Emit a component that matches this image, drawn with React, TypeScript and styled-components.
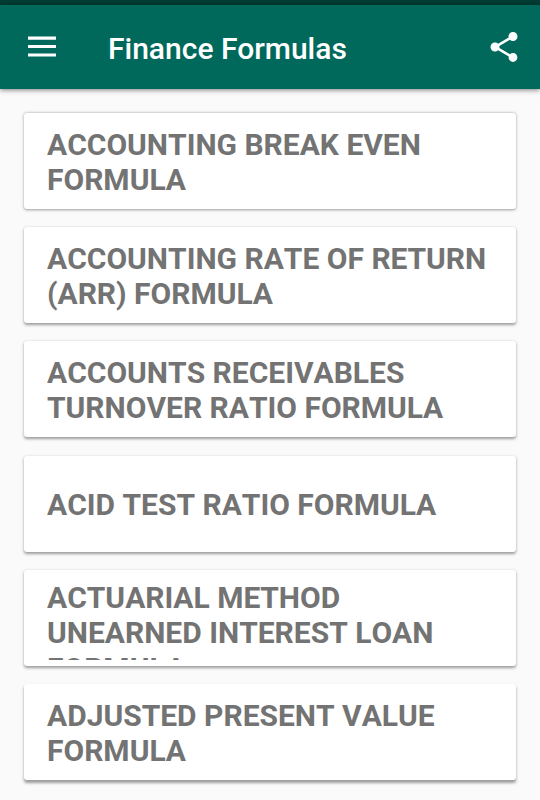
import React from 'react';
import styled, { createGlobalStyle } from 'styled-components';

const Global = createGlobalStyle`
  * { box-sizing: border-box; }
  body { margin: 0; background: #fafafa; font-family: Roboto, sans-serif; }
`;

const Screen = styled.main`
  width: 540px;
  height: 800px;
  overflow: hidden;
  background: #fafafa;
`;

const StatusBar = styled.div`
  height: 5px;
  background: #003d34;
`;

const AppBar = styled.header`
  height: 84px;
  display: flex;
  align-items: center;
  padding: 0 18px 0 27px;
  background: #00695c;
  color: #fff;
  box-shadow: 0 1px 5px rgba(0, 0, 0, 0.5);
`;

const Title = styled.h1`
  flex: 1;
  margin: 3px 0 0 51px;
  font-size: 30px;
  line-height: 36px;
  font-weight: 500;
  white-space: nowrap;
`;

const List = styled.ul`
  list-style: none;
  margin: 0;
  padding: 24px 24px 0;
  display: flex;
  flex-direction: column;
  gap: 18.2px;
`;

const Card = styled.li<{ $depth: number }>`
  height: 96px;
  flex: none;
  padding: 6px 23px;
  background: #fff;
  border-radius: 3px;
  box-shadow: 0 ${(p) => 0.8 + p.$depth * 0.25}px 3px rgba(0, 0, 0, 0.38);
`;

const Label = styled.div<{ $clipped?: boolean }>`
  height: 84px;
  padding-top: ${(p) => (p.$clipped ? 4 : 2)}px;
  overflow: hidden;
  display: flex;
  flex-direction: column;
  justify-content: ${(p) => (p.$clipped ? 'flex-start' : 'center')};
  color: #737373;
  font-size: 30px;
  font-kerning: none;
  line-height: 35.4px;
  font-weight: 700;
  white-space: nowrap;
`;

const formulas = [
  ['ACCOUNTING BREAK EVEN', 'FORMULA'],
  ['ACCOUNTING RATE OF RETURN', '(ARR) FORMULA'],
  ['ACCOUNTS RECEIVABLES', 'TURNOVER RATIO FORMULA'],
  ['ACID TEST RATIO FORMULA'],
  ['ACTUARIAL METHOD', 'UNEARNED INTEREST LOAN', 'FORMULA'],
  ['ADJUSTED PRESENT VALUE', 'FORMULA'],
];

const MenuIcon = () => (
  <svg width="30" height="24" viewBox="0 0 30 24" fill="#fff">
    <path d="M1 1.6h28v3.1H1zM1 10h28v3.1H1zM1 18.4h28v3.1H1z" />
  </svg>
);

const ShareIcon = () => (
  <svg width="36" height="36" viewBox="0 0 24 24" fill="#fff">
    <path d="M18 16.08c-.76 0-1.44.3-1.96.77L8.91 12.7c.05-.23.09-.46.09-.7s-.04-.47-.09-.7l7.05-4.11c.54.5 1.25.81 2.04.81 1.66 0 3-1.34 3-3s-1.34-3-3-3-3 1.34-3 3c0 .24.04.47.09.7L8.04 9.81C7.5 9.31 6.79 9 6 9c-1.66 0-3 1.34-3 3s1.34 3 3 3c.79 0 1.5-.31 2.04-.81l7.12 4.16c-.05.21-.08.43-.08.65 0 1.61 1.31 2.92 2.92 2.92s2.92-1.31 2.92-2.92-1.31-2.92-2.92-2.92z" />
  </svg>
);

export default function App() {
  return (
    <Screen>
      <Global />
      <StatusBar />
      <AppBar>
        <MenuIcon />
        <Title>Finance Formulas</Title>
        <ShareIcon />
      </AppBar>
      <List>
        {formulas.map((lines, i) => (
          <Card key={lines.join(' ')} $depth={i}>
            <Label $clipped={lines.length > 2}>
              {lines.map((line) => (
                <span key={line}>{line}</span>
              ))}
            </Label>
          </Card>
        ))}
      </List>
    </Screen>
  );
}
